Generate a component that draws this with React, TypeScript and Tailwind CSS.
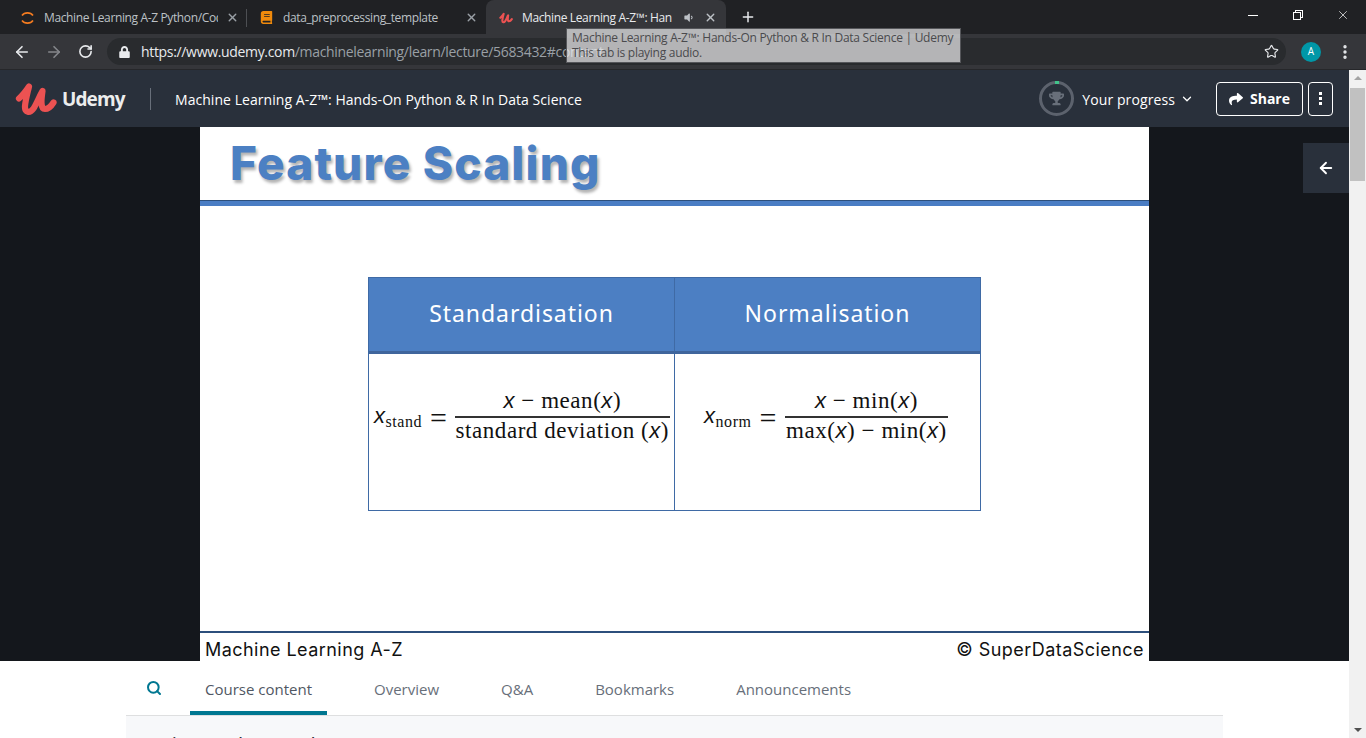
import { ArrowLeft, ArrowRight, ChevronDown, ChevronUp, MoreVertical, Plus, RotateCw, Search, Star, X } from "lucide-react";
import { FaBook, FaLock, FaShare, FaTrophy, FaVolumeDown } from "react-icons/fa";

/* small udemy mark, used big in the header and small in the tab */
function UdemyMark({ className }: { className: string }) {
  return (
    <svg viewBox="0 0 42 34" className={className} fill="none">
      <path
        d="M4 16.5 C7.5 13.5 11 9 14 4.5 C12.5 11 10.5 18 10 24 C9.5 31 15 31.5 18.5 26.5 C21.5 22 24.5 14 27.5 9 C26.5 16 25 27 30 27 C33 27 36 24.5 38.5 20.5"
        stroke="#ec5252"
        strokeWidth="6.2"
        strokeLinecap="round"
        strokeLinejoin="round"
      />
    </svg>
  );
}

function ChromeTabs() {
  return (
    <div className="flex h-[34px] bg-[#202124] font-['Open_Sans',sans-serif] text-xs tracking-[-0.37px]">
      {/* tab 1 */}
      <div className="flex w-[246px] items-center pl-[20px] pt-[1px]">
        <svg viewBox="0 0 14 14" className="h-[14px] w-[15px] shrink-0" fill="none" stroke="#f57c20" strokeWidth="1.6">
          <path d="M1.5 4.5 C4 1 10 1 12.5 4.5" />
          <path d="M1.5 9.5 C4 13 10 13 12.5 9.5" />
        </svg>
        <span className="ml-[9px] w-[174px] overflow-hidden whitespace-nowrap text-[#bdc1c6]">Machine Learning A-Z Python/Code</span>
        <X className="ml-[8px] h-[13px] w-[13px] text-[#9aa0a6]" strokeWidth={2.5} />
      </div>
      <div className="mt-[9px] h-[18px] w-px bg-[#4d4f53]" />
      {/* tab 2 */}
      <div className="flex w-[239px] items-center pl-[13px] pt-[1px]">
        <FaBook className="h-[13px] w-[13px] shrink-0 text-[#f08a0c]" />
        <span className="ml-[10px] w-[182px] whitespace-nowrap text-[#bdc1c6]">data_preprocessing_template</span>
        <X className="h-[13px] w-[13px] text-[#9aa0a6]" strokeWidth={2.5} />
      </div>
      {/* active tab */}
      <div className="flex h-[34px] w-[240px] items-center rounded-t-lg bg-[#35363a] pl-[13px] pt-[1px]">
        <UdemyMark className="h-[12px] w-[14px] shrink-0" />
        <span className="ml-[9px] w-[150px] overflow-hidden whitespace-nowrap text-[#e8eaed]">Machine Learning A-Z™: Hands-On</span>
        <FaVolumeDown className="ml-[11px] h-[11px] w-[11px] text-[#bdc1c6]" />
        <X className="ml-[10px] h-[13px] w-[13px] text-[#bdc1c6]" strokeWidth={2.5} />
      </div>
      <div className="flex items-center pl-[14px]">
        <Plus className="h-[16px] w-[16px] text-[#e8eaed]" strokeWidth={2.2} />
      </div>
      {/* window buttons */}
      <div className="ml-auto flex h-[30px] items-center">
        <div className="flex w-[45px] justify-center">
          <div className="h-px w-[10px] bg-white" />
        </div>
        <div className="flex w-[45px] justify-center">
          <div className="relative h-[10px] w-[10px]">
            <div className="absolute left-[2px] top-0 h-[8px] w-[8px] border border-white" />
            <div className="absolute bottom-0 left-0 h-[8px] w-[8px] border border-white bg-[#202124]" />
          </div>
        </div>
        <div className="flex w-[46px] justify-center">
          <X className="h-[14px] w-[14px] text-white" strokeWidth={1.2} />
        </div>
      </div>
    </div>
  );
}

function ChromeToolbar() {
  return (
    <div className="flex h-[36px] items-center border-b border-[#26272a] bg-[#35363a] font-['Open_Sans',sans-serif]">
      <ArrowLeft className="ml-[13px] h-[18px] w-[18px] text-[#e8eaed]" strokeWidth={2.2} />
      <ArrowRight className="ml-[14px] h-[18px] w-[18px] text-[#85878b]" strokeWidth={2.2} />
      <RotateCw className="ml-[15px] h-[15px] w-[15px] text-[#e8eaed]" strokeWidth={2.6} />
      <div className="ml-[14px] flex h-[27px] w-[1179px] items-center rounded-full bg-[#292b2e] pl-[12px] pr-[7px]">
        <FaLock className="h-[12px] w-[11px] text-[#e8eaed]" />
        <span className="ml-[11px] whitespace-nowrap text-sm tracking-[-0.33px] text-[#e8eaed]">
          https://www.udemy.com<span className="text-[#9aa0a6]">/machinelearning/learn/lecture/5683432#content</span>
        </span>
        <Star className="ml-auto h-[15px] w-[15px] text-[#e8eaed]" strokeWidth={1.8} />
      </div>
      <div className="ml-[15px] flex h-[20px] w-[20px] items-center justify-center rounded-full bg-[#0097a7] text-[10px] text-white">A</div>
      <MoreVertical className="ml-[15px] h-[18px] w-[18px] text-[#e8eaed]" strokeWidth={2.5} />
    </div>
  );
}

function CourseHeader() {
  return (
    <div className="flex h-[57px] shrink-0 items-center bg-[#29303b] font-['Open_Sans',sans-serif] text-white">
      <UdemyMark className="ml-[15px] h-[34px] w-[42px] shrink-0" />
      <span className="ml-[5px] w-[64px] pt-[1px] text-[19px] font-bold tracking-[-0.9px] text-[#eceded]">Udemy</span>
      <div className="ml-[24px] h-[22px] w-px bg-[#686f7a]" />
      <span className="ml-[24px] pt-[2px] text-sm font-medium tracking-[0.05px]">Machine Learning A-Z™: Hands-On Python &amp; R In Data Science</span>
      <div className="relative ml-auto flex h-[35px] w-[35px] items-center justify-center rounded-full border-[3px] border-[#5c626d]">
        <div className="absolute left-[13px] top-[-3px] h-[3px] w-[4px] bg-[#41c38a]" />
        <FaTrophy className="h-[15px] w-[15px] text-[#686f7a]" />
      </div>
      <span className="ml-[8px] pt-[2px] text-sm font-medium tracking-[0.1px]">Your progress</span>
      <ChevronDown className="ml-[5px] h-[14px] w-[14px]" strokeWidth={2.2} />
      <button className="ml-[22px] flex h-[34px] w-[87px] items-center justify-center gap-[7px] rounded-sm border border-white pt-[1px] text-sm font-bold">
        <FaShare className="h-[14px] w-[14px]" />
        Share
      </button>
      <button className="ml-[5px] mr-[16px] flex h-[34px] w-[25px] items-center justify-center rounded-sm border border-white">
        <div className="flex flex-col gap-[2px]">
          <div className="h-[3px] w-[3px] bg-white" />
          <div className="h-[3px] w-[3px] bg-white" />
          <div className="h-[3px] w-[3px] bg-white" />
        </div>
      </button>
    </div>
  );
}

function Frac({ top, bottom }: { top: React.ReactNode; bottom: React.ReactNode }) {
  return (
    <div className="flex flex-col items-center">
      <div className="h-[30px] whitespace-pre px-[1px] leading-[30px]">{top}</div>
      <div className="h-[2px] w-full bg-[#333]" />
      <div className="h-[30px] whitespace-pre px-[1px] leading-[26px]">{bottom}</div>
    </div>
  );
}

function X1() {
  return <i className="font-['Liberation_Sans',sans-serif] text-[22px]">x</i>;
}

function Slide() {
  return (
    <div className="flex h-[534px] w-[949px] flex-col bg-white">
      <div className="h-[73px] pl-[30px] pt-[5px] font-['Inter',sans-serif] text-[46px] font-extrabold leading-[62px] tracking-[1.15px] text-[#4c80c3] [text-shadow:2px_3px_3px_rgba(0,0,0,0.3)]">
        Feature Scaling
      </div>
      <div className="h-[6px] border-t border-[#2c4f7c] bg-[#4a7dc4]" />

      <div className="ml-[168px] mt-[71px] grid h-[234px] w-[613px] grid-cols-[306px_305px] grid-rows-[76px_156px] border border-[#3f6aa5] font-['Liberation_Serif',serif] text-[23px] text-[#111]">
        <div className="flex items-center justify-center border-r border-b-[3px] border-r-[#3f6aa5] border-b-[#3f659c] bg-[#4c7fc3] pb-[2px] font-['Noto_Sans',sans-serif] text-[23px] tracking-[0.95px] text-white">
          Standardisation
        </div>
        <div className="flex items-center justify-center border-b-[3px] border-b-[#3f659c] bg-[#4c7fc3] pb-[2px] font-['Noto_Sans',sans-serif] text-[23px] tracking-[0.95px] text-white">
          Normalisation
        </div>
        <div className="flex items-start border-r border-[#3f6aa5] pl-[5px] pt-[32px] tracking-[0.55px]">
          <span className="mt-[13px] whitespace-nowrap">
            <X1 />
            <span className="align-[-4px] text-[16px]">stand</span>
          </span>
          <span className="ml-[8px] mr-[7px] mt-[15px] text-[30px] leading-[34px]">=</span>
          <Frac top={<><X1 /> − mean(<X1 />)</>} bottom={<>standard deviation (<X1 />)</>} />
        </div>
        <div className="flex items-start pl-[29px] pt-[32px] tracking-[0.55px]">
          <span className="mt-[13px] whitespace-nowrap">
            <X1 />
            <span className="align-[-4px] text-[16px]">norm</span>
          </span>
          <span className="mx-[8px] mt-[15px] text-[30px] leading-[34px]">=</span>
          <Frac top={<><X1 /> − min(<X1 />)</>} bottom={<>max(<X1 />) − min(<X1 />)</>} />
        </div>
      </div>

      <div className="mt-auto flex h-[30px] items-center justify-between border-t-2 border-[#2c4f7c] px-[5px] pt-[4px] font-['Inter',sans-serif] text-[18px] tracking-[0.45px] text-[#111]">
        <span>Machine Learning A-Z</span>
        <span>© SuperDataScience</span>
      </div>
    </div>
  );
}

function CourseTabs() {
  const others = ["Overview", "Q&A", "Bookmarks", "Announcements"];
  return (
    <div className="mx-auto w-[1097px] font-['Open_Sans',sans-serif] text-[15px]">
      <div className="flex h-[55px] items-stretch border-b border-[#dedfe0]">
        <div className="flex w-[64px] items-center justify-start pl-[20px] pb-[1px]">
          <Search className="h-[16px] w-[16px] text-[#007791]" strokeWidth={3} />
        </div>
        <div className="flex items-center border-b-4 border-[#007791] px-[15px] pt-[7px] text-[#505763]">Course content</div>
        <div className="ml-[32px] flex gap-[32px]">
          {others.map((tab) => (
            <div key={tab} className="flex items-center px-[15px] pt-[3px] text-[#686f7a]">
              {tab}
            </div>
          ))}
        </div>
      </div>
      <div className="flex h-[40px] items-start justify-between bg-[#f7f8fa] pl-[16px] pr-[15px] pt-[16px] text-[15px] font-semibold text-[#29303b]">
        <span className="leading-[20px]">Section: 1 Welcome to the course!</span>
        <ChevronUp className="mt-[3px] h-[18px] w-[18px] text-[#29303b]" strokeWidth={2} />
      </div>
    </div>
  );
}

export default function App() {
  return (
    <div className="relative flex h-[738px] w-[1366px] flex-col overflow-hidden bg-white">
      <ChromeTabs />
      <ChromeToolbar />

      <div className="flex min-h-0 flex-1">
        <div className="relative flex min-w-0 flex-1 flex-col">
          <CourseHeader />
          <div className="flex justify-center bg-[#14171c]">
            <Slide />
          </div>
          <CourseTabs />
          {/* sidebar toggle */}
          <div className="absolute right-0 top-[73px] flex h-[50px] w-[46px] items-center justify-center bg-[#29303b]">
            <ArrowLeft className="h-[18px] w-[18px] text-white" strokeWidth={2.5} />
          </div>
        </div>

        {/* page scrollbar */}
        <div className="flex w-[17px] shrink-0 flex-col items-center bg-[#f1f1f1]">
          <div className="mt-[6px] h-0 w-0 border-x-[4px] border-b-[4px] border-x-transparent border-b-[#a3a3a3]" />
          <div className="mt-[8px] h-[93px] w-[15px] bg-[#c1c1c1]" />
          <div className="mb-[6px] mt-auto h-0 w-0 border-x-[4px] border-t-[4px] border-x-transparent border-t-[#505050]" />
        </div>
      </div>

      {/* tab hover tooltip, slightly see-through like the native one */}
      <div className="absolute left-[566px] top-[28px] h-[35px] w-[395px] border border-[#55565a] bg-[#efeff1]/70 pl-[5px] pt-[1px] font-['Open_Sans',sans-serif] text-xs leading-[15px] tracking-[-0.27px] text-[#4a4a4d]">
        <div className="whitespace-nowrap">Machine Learning A-Z™: Hands-On Python &amp; R In Data Science | Udemy</div>
        <div>This tab is playing audio.</div>
      </div>
    </div>
  );
}
